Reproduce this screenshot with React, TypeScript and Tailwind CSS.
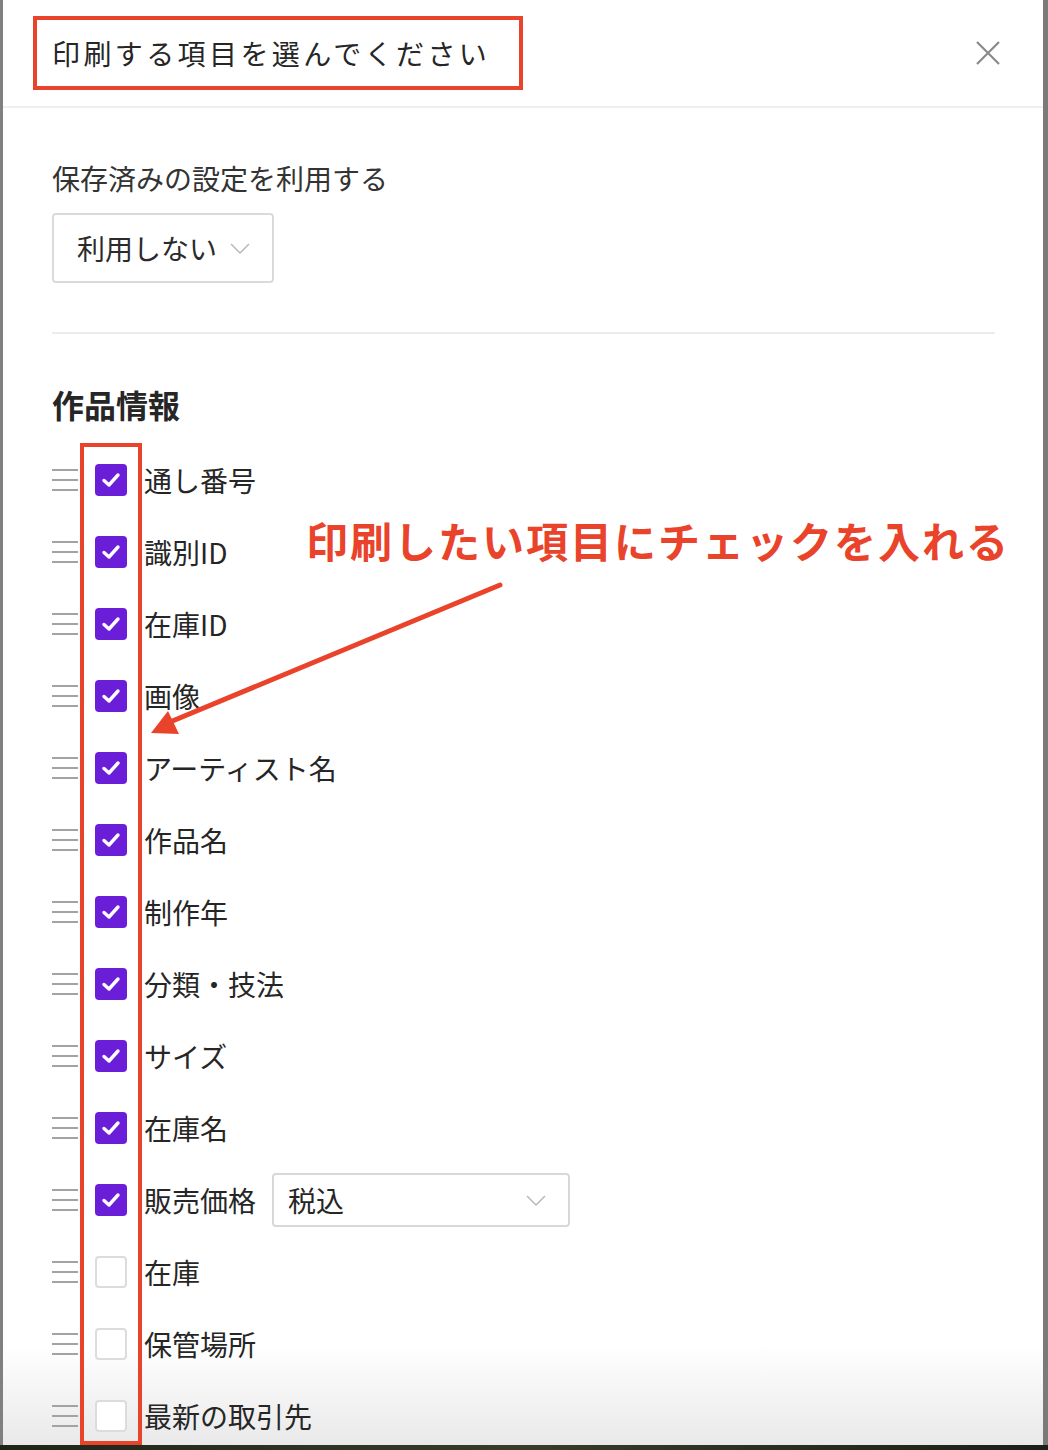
import React from "react";

const FONT = { fontFamily: '"Noto Sans CJK JP", "Noto Sans", sans-serif' };

const items: { label: string; checked: boolean; price?: boolean }[] = [
  { label: "通し番号", checked: true },
  { label: "識別ID", checked: true },
  { label: "在庫ID", checked: true },
  { label: "画像", checked: true },
  { label: "アーティスト名", checked: true },
  { label: "作品名", checked: true },
  { label: "制作年", checked: true },
  { label: "分類・技法", checked: true },
  { label: "サイズ", checked: true },
  { label: "在庫名", checked: true },
  { label: "販売価格", checked: true, price: true },
  { label: "在庫", checked: false },
  { label: "保管場所", checked: false },
  { label: "最新の取引先", checked: false },
];

function Chevron({ className }: { className?: string }) {
  return (
    <svg viewBox="0 0 20 11" className={className} fill="none">
      <polyline points="1,1 10,10 19,1" stroke="#bdbdbd" strokeWidth="1.6" />
    </svg>
  );
}

function DragHandle() {
  return (
    <div className="flex w-[26px] flex-col gap-[7.5px]">
      <span className="h-[2.5px] w-full bg-[#a3a3a3]" />
      <span className="h-[2.5px] w-full bg-[#a3a3a3]" />
      <span className="h-[2.5px] w-full bg-[#a3a3a3]" />
    </div>
  );
}

function Checkbox({ checked }: { checked: boolean }) {
  if (!checked) {
    return (
      <span className="block h-[32px] w-[32px] rounded-[4px] border-2 border-[#dcdcdc] bg-white" />
    );
  }
  return (
    <span className="flex h-[32px] w-[32px] items-center justify-center rounded-[4px] bg-[#6a1ed8]">
      <svg viewBox="0 0 22 22" className="h-[22px] w-[22px]" fill="none">
        <polyline
          points="4,11.5 9,16 18,6"
          stroke="white"
          strokeWidth="3.4"
          strokeLinecap="round"
          strokeLinejoin="round"
        />
      </svg>
    </span>
  );
}

export default function App() {
  return (
    <div
      className="relative flex h-[1450px] w-[1048px] flex-col overflow-hidden bg-[#7f7f7f] text-[#2b2b2b]"
      style={FONT}
    >
      <div className="flex h-[1445px]">
        <div className="w-[3px] bg-[#808080]" />
        <div className="relative h-full w-[1040px] overflow-hidden bg-white">
          <div className="pointer-events-none absolute bottom-0 left-0 h-[100px] w-full bg-gradient-to-b from-white/0 to-[#e9e9e9]" />

          <div className="relative">
            <header className="flex h-[108px] items-center justify-between border-b-2 border-[#efefef] pl-[30px] pr-[43px]">
              <div className="flex h-[74px] w-[490px] items-center border-[4px] border-[#e8442b] pl-[15px]">
                <h1 className="text-[28px] leading-none tracking-[3.4px] text-[#262626]">
                  印刷する項目を選んでください
                </h1>
              </div>
              <svg viewBox="0 0 24 24" className="h-[24px] w-[24px]" fill="none">
                <path d="M1 1 L23 23 M23 1 L1 23" stroke="#8a8a8a" strokeWidth="2.2" />
              </svg>
            </header>

            <div className="px-[49px] pt-[52px]">
              <p className="text-[28px] leading-[36px] text-[#333]">保存済みの設定を利用する</p>
              <div className="mt-[17px] flex h-[70px] w-[222px] items-center justify-between rounded-[4px] border-2 border-[#dadada] pl-[23px] pr-[22px]">
                <span className="text-[28px] leading-none text-[#2b2b2b]">利用しない</span>
                <Chevron className="h-[11px] w-[20px]" />
              </div>

              <div className="mt-[49px] h-[2px] w-[943px] bg-[#ececec]" />

              <h2 className="mt-[50px] text-[32px] font-bold leading-[40px] text-[#262626]">作品情報</h2>

              <ul className="mt-[20px]">
                {items.map((item) => (
                  <li key={item.label} className="flex h-[72px] items-center">
                    <DragHandle />
                    <span className="ml-[17px]">
                      <Checkbox checked={item.checked} />
                    </span>
                    <span className="ml-[17px] text-[28px] leading-none text-[#262626]">
                      {item.label}
                    </span>
                    {item.price && (
                      <div className="ml-[16px] flex h-[54px] w-[298px] items-center justify-between rounded-[4px] border-2 border-[#d8d8d8] pl-[14px] pr-[22px]">
                        <span className="text-[28px] leading-none text-[#262626]">税込</span>
                        <Chevron className="h-[11px] w-[20px]" />
                      </div>
                    )}
                  </li>
                ))}
              </ul>
            </div>
          </div>

          <div className="pointer-events-none absolute left-[77px] top-[443px] h-[1002px] w-[62px] border-[4px] border-[#e8442b]" />
        </div>
        <div className="w-[5px] bg-[#7a7a7a]" />
      </div>
      <div className="h-[5px] bg-gradient-to-r from-[#1e241a] via-[#3a3b2a] to-[#1b1f18]" />

      <p className="pointer-events-none absolute left-[306px] top-[515px] text-[42px] font-bold leading-[50px] tracking-[2px] text-[#e9442b]">
        印刷したい項目にチェックを入れる
      </p>

      <svg
        className="pointer-events-none absolute left-0 top-0 h-[1450px] w-[1048px]"
        viewBox="0 0 1048 1450"
        fill="none"
      >
        <line x1="500" y1="585" x2="170" y2="722" stroke="#e9442b" strokeWidth="5" strokeLinecap="round" />
        <polygon points="151,733 168,711 179,734" fill="#e9442b" />
      </svg>
    </div>
  );
}
